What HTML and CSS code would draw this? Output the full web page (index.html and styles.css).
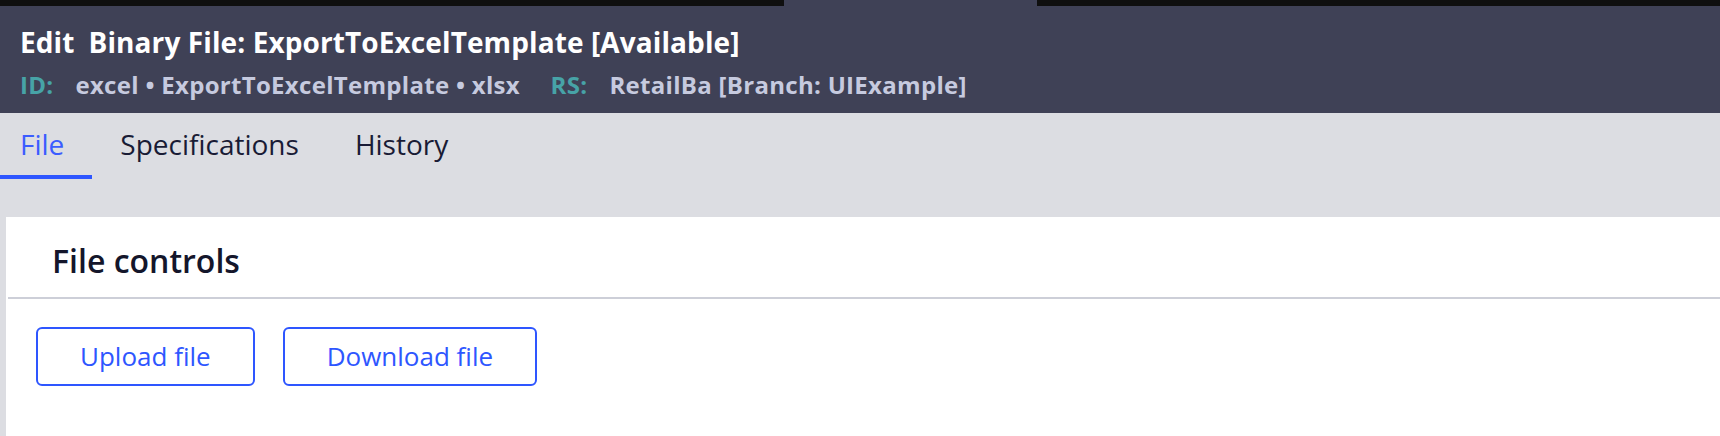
FILE: index.html
```html
<!DOCTYPE html>
<html lang="en">
<head>
  <meta charset="UTF-8">
  <meta name="viewport" content="width=device-width, initial-scale=1.0">
  <title>Edit Binary File</title>
  <link rel="stylesheet" href="styles.css">
</head>
<body>
  <div class="topbar">
    <div class="topbar-dark"></div>
    <div class="topbar-tab"></div>
    <div class="topbar-fill"></div>
  </div>
  <div class="header">
    <h1 class="title"><span class="title-action">Edit</span>Binary File: ExportToExcelTemplate [Available]</h1>
    <div class="meta">
      <span class="meta-label">ID:</span><span class="meta-value">excel &bull; ExportToExcelTemplate &bull; xlsx</span>
      <span class="meta-label meta-label-next">RS:</span><span class="meta-value">RetailBa [Branch: UIExample]</span>
    </div>
  </div>
  <div class="tabs">
    <a href="#" class="tab active">File</a>
    <a href="#" class="tab">Specifications</a>
    <a href="#" class="tab">History</a>
  </div>
  <div class="card">
    <div class="card-header">
      <h2>File controls</h2>
    </div>
    <div class="card-body">
      <button class="btn">Upload file</button>
      <button class="btn">Download file</button>
    </div>
  </div>
</body>
</html>
```
FILE: styles.css
```css
body, html {
  margin: 0;
  padding: 0;
  font-family: "Open Sans", "Noto Sans", sans-serif;
  background-color: #dcdde2;
}

.topbar {
  display: flex;
  height: 6px;
  background-color: #0f0f0f;
}

.topbar-dark {
  width: 784px;
  flex-shrink: 0;
}

.topbar-tab {
  width: 253px;
  flex-shrink: 0;
  background-color: #3f4156;
}

.topbar-fill {
  flex-grow: 1;
}

.header {
  background-color: #3f4156;
  height: 107px;
  box-sizing: border-box;
  padding: 18px 20px 0;
}

.title {
  margin: 0;
  font-size: 28px;
  line-height: 36px;
  font-weight: 700;
  letter-spacing: 0.1px;
  color: #ffffff;
}

.title-action {
  margin-right: 14px;
}

.meta {
  margin-top: 10px;
  font-size: 24px;
  line-height: 30px;
  font-weight: 700;
  letter-spacing: 0.3px;
  color: #c6cadf;
}

.meta-label {
  color: #47a3a7;
  margin-right: 22px;
}

.meta-label-next {
  margin-left: 24px;
}

.tabs {
  display: flex;
  padding-top: 13px;
  height: 104px;
  box-sizing: border-box;
}

.tab {
  display: block;
  padding: 0 28px 13px;
  font-size: 28px;
  line-height: 36px;
  color: #191b35;
  text-decoration: none;
  border-bottom: 4px solid transparent;
  align-self: flex-start;
}

.tab:first-child {
  padding-left: 20px;
}

.tab.active {
  color: #3b5cff;
  border-bottom-color: #2e56ff;
}

.card {
  margin-left: 6px;
  background-color: #fff;
  min-height: 240px;
}

.card-header {
  padding: 24px 44px 0;
  height: 82px;
  box-sizing: border-box;
  border-bottom: 2px solid #cdcfd8;
  margin-left: 2px;
}

.card-header h2 {
  margin: 0;
  font-size: 32px;
  line-height: 40px;
  font-weight: 600;
  color: #14162b;
}

.card-body {
  display: flex;
  gap: 28px;
  padding: 28px 30px;
}

.btn {
  font-family: "Open Sans", "Noto Sans", sans-serif;
  font-size: 26px;
  line-height: 35px;
  padding: 10px 42px;
  color: #2e56ff;
  background-color: #fff;
  border: 2px solid #2e56ff;
  border-radius: 6px;
  cursor: pointer;
}
```
